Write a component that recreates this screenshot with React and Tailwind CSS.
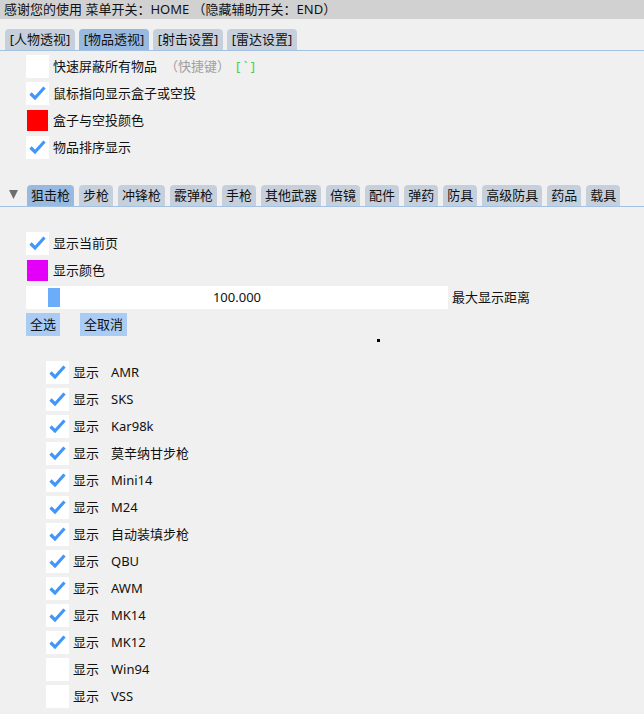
import React from "react";

const Check = () => (
  <svg width="23" height="23" viewBox="0 0 23 23">
    <polyline points="4.5,11.5 9,16 18.5,5.5" fill="none" stroke="#4296fa" strokeWidth="3.2" strokeLinecap="butt" strokeLinejoin="miter" />
  </svg>
);

const Box = ({ checked }) => (
  <div className="w-[23px] h-[23px] bg-white shrink-0">{checked ? <Check /> : null}</div>
);

const Swatch = ({ color }) => (
  <div className="w-[23px] h-[23px] shrink-0 flex items-center justify-center">
    <div className={`w-[21px] h-[21px] ${color}`} />
  </div>
);

const tabs1 = [
  { t: "[人物透视]" },
  { t: "[物品透视]", a: true },
  { t: "[射击设置]" },
  { t: "[雷达设置]" },
];

const tabs2 = ["狙击枪", "步枪", "冲锋枪", "霰弹枪", "手枪", "其他武器", "倍镜", "配件", "弹药", "防具", "高级防具", "药品", "载具"];

const items = [
  ["AMR", true],
  ["SKS", true],
  ["Kar98k", true],
  ["莫辛纳甘步枪", true],
  ["Mini14", true],
  ["M24", true],
  ["自动装填步枪", true],
  ["QBU", true],
  ["AWM", true],
  ["MK14", true],
  ["MK12", true],
  ["Win94", false],
  ["VSS", false],
];

export default function App() {
  return (
    <div className="relative w-[644px] h-[714px] overflow-hidden bg-[#f0f0f0] text-[13px] leading-none text-[#111] font-['Noto_Sans','Noto_Sans_CJK_SC',sans-serif]">
      <div className="h-[19px] bg-[#d1d1d1] pl-[4px] flex items-center">
        感谢您的使用 菜单开关：HOME （隐藏辅助开关：END）
      </div>

      <div className="mt-[10px] pl-[5px] flex gap-[4px] border-b border-[#a3c1e3]">
        {tabs1.map((x) => (
          <div
            key={x.t}
            className={`h-[21px] w-[70px] rounded-t-[4px] flex items-center justify-center ${x.a ? "bg-[#98bae1]" : "bg-[#c6d0dc]"}`}
          >
            {x.t}
          </div>
        ))}
      </div>

      <div className="mt-[4px] pl-[26px] flex flex-col gap-[4px]">
        <div className="h-[23px] flex items-center gap-[4px]">
          <Box />
          <span>快速屏蔽所有物品</span>
          <span className="ml-[4px] text-[#a0a0a0]">（快捷键）</span>
          <span className="ml-[2px] text-[#3fd43f]">[ ` ]</span>
        </div>
        <div className="h-[23px] flex items-center gap-[4px]">
          <Box checked />
          <span>鼠标指向显示盒子或空投</span>
        </div>
        <div className="h-[23px] flex items-center gap-[4px]">
          <Swatch color="bg-[#ff0000]" />
          <span>盒子与空投颜色</span>
        </div>
        <div className="h-[23px] flex items-center gap-[4px]">
          <Box checked />
          <span>物品排序显示</span>
        </div>
      </div>

      <div className="mt-[26px] pl-[9px] flex items-center border-b border-[#a3c1e3]">
        <svg width="9" height="9" viewBox="0 0 9 9" className="mr-[9px] -mt-[2px]">
          <polygon points="0,0 9,0 4.5,9" fill="#6e6e6e" />
        </svg>
        <div className="flex gap-[5px]">
          {tabs2.map((t, i) => (
            <div
              key={t}
              className={`h-[21px] px-[4px] rounded-t-[4px] flex items-center ${i === 0 ? "bg-[#98bae1]" : "bg-[#c6d0dc]"}`}
            >
              {t}
            </div>
          ))}
        </div>
      </div>

      <div className="mt-[25px] pl-[26px] flex flex-col gap-[4px]">
        <div className="h-[23px] flex items-center gap-[4px]">
          <Box checked />
          <span>显示当前页</span>
        </div>
        <div className="h-[23px] flex items-center gap-[4px]">
          <Swatch color="bg-[#e400f8]" />
          <span>显示颜色</span>
        </div>
        <div className="h-[23px] flex items-center gap-[4px]">
          <div className="relative w-[422px] h-[23px] bg-white flex items-center pl-[22px]">
            <div className="w-[12px] h-[19px] bg-[#6badfb]" />
            <div className="absolute inset-0 flex items-center justify-center">100.000</div>
          </div>
          <span>最大显示距离</span>
        </div>
        <div className="h-[23px] flex items-center gap-[20px]">
          <div className="h-[23px] px-[4px] bg-[#aaccf4] flex items-center">全选</div>
          <div className="h-[23px] px-[4px] bg-[#aaccf4] flex items-center">全取消</div>
        </div>
      </div>

      <div className="mt-[25px] pl-[46px] flex flex-col gap-[4px]">
        {items.map(([n, c]) => (
          <div key={n} className="h-[23px] flex items-center">
            <Box checked={c} />
            <span className="ml-[4px] w-[38px]">显示</span>
            <span>{n}</span>
          </div>
        ))}
      </div>

      <div className="absolute left-[377px] top-[339px] w-[3px] h-[3px] bg-black" />
    </div>
  );
}
